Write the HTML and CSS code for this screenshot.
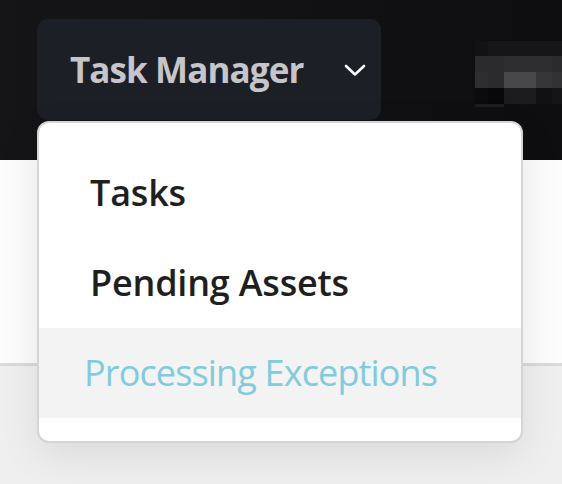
FILE: index.html
```html
<!DOCTYPE html>
<html>
<head>
<meta charset="utf-8">
<link rel="stylesheet" href="styles.css">
</head>
<body>
<header class="topbar">
  <div class="menu-wrap">
    <button class="menu-btn">
      <span class="menu-label">Task Manager</span>
      <svg class="chev" width="22" height="13" viewBox="0 0 22 13"><path d="M2 2 L11 10.5 L20 2" fill="none" stroke="#ffffff" stroke-width="2.6" stroke-linecap="round" stroke-linejoin="round"/></svg>
    </button>
    <ul class="dropdown">
      <li class="item">Tasks</li>
      <li class="item">Pending Assets</li>
      <li class="item active">Processing Exceptions</li>
    </ul>
  </div>
  <div class="blur">
    <div class="px a"></div><div class="px b"></div><div class="px b"></div><div class="px b"></div><div class="px b"></div><div class="px b"></div>
    <div class="px c"></div><div class="px c"></div><div class="px d"></div><div class="px d"></div><div class="px d"></div><div class="px c"></div>
    <div class="px d"></div><div class="px c"></div><div class="px e"></div><div class="px e"></div><div class="px f"></div><div class="px g"></div>
    <div class="px h"></div><div class="px i"></div><div class="px j"></div><div class="px j"></div><div class="px k"></div><div class="px l"></div>
  </div>
</header>
<section class="band"></section>
<section class="below"></section>
</body>
</html>
```
FILE: styles.css
```css
html, body {
  margin: 0;
  padding: 0;
}
body {
  width: 562px;
  height: 484px;
  overflow: hidden;
  background: #efefef;
  font-family: "Open Sans", "Noto Sans", sans-serif;
}
.topbar {
  height: 160px;
  box-sizing: border-box;
  padding: 19px 0 0 37px;
  display: flex;
  align-items: flex-start;
  background: linear-gradient(90deg, #151518 0%, #111113 60%, #0e0e10 100%);
  position: relative;
  z-index: 2;
}
.menu-wrap {
  position: relative;
}
.menu-btn {
  display: flex;
  align-items: center;
  width: 344px;
  height: 101px;
  box-sizing: border-box;
  padding: 0 0 0 33px;
  border: none;
  border-radius: 11px;
  background: #1d1f26;
  font-family: inherit;
  cursor: pointer;
}
.menu-label {
  font-size: 35px;
  font-weight: 700;
  color: #c6c6ca;
  line-height: 101px;
  letter-spacing: -0.9px;
}
.chev {
  margin-left: 41px;
  margin-top: 2px;
}
.dropdown {
  position: absolute;
  top: 102px;
  left: 0;
  width: 486px;
  box-sizing: border-box;
  margin: 0;
  padding: 25px 0 23px;
  list-style: none;
  background: #ffffff;
  border: 2px solid #d5d5d5;
  border-radius: 12px;
  box-shadow: 0 12px 40px rgba(0, 0, 0, 0.09);
}
.item {
  height: 90px;
  line-height: 90px;
  padding-left: 51px;
  font-size: 36px;
  font-weight: 600;
  color: #1f1f1f;
  letter-spacing: -0.2px;
}
.item.active {
  background: #f3f3f3;
  color: #80cbdc;
  font-weight: 500;
  padding-left: 45px;
  letter-spacing: -0.85px;
}
.blur {
  margin-left: 94px;
  margin-top: 22px;
  display: grid;
  grid-template-columns: 13px 16px 16px 16px 16px 16px;
  grid-template-rows: 15px 16px 16px 16px;
  width: 93px;
}
.px.a { background: #121214; }
.px.b { background: #161618; }
.px.c { background: #2b2b2d; }
.px.d { background: #2e2e30; }
.px.e { background: #48484a; }
.px.f { background: #363638; }
.px.g { background: #323234; }
.px.h { background: #0b0b0d; border-bottom: 3px solid #1e1e20; margin-bottom: -3px; }
.px.i { background: #08080a; border-bottom: 3px solid #1e1e20; margin-bottom: -3px; }
.px.j { background: #1c1c1e; }
.px.k { background: #111113; }
.px.l { background: #151517; }
.band {
  height: 203px;
  background: #fcfcfc;
  border-bottom: 3px solid #dadada;
}
.below {
  height: 118px;
  background: #efefef;
}
```
